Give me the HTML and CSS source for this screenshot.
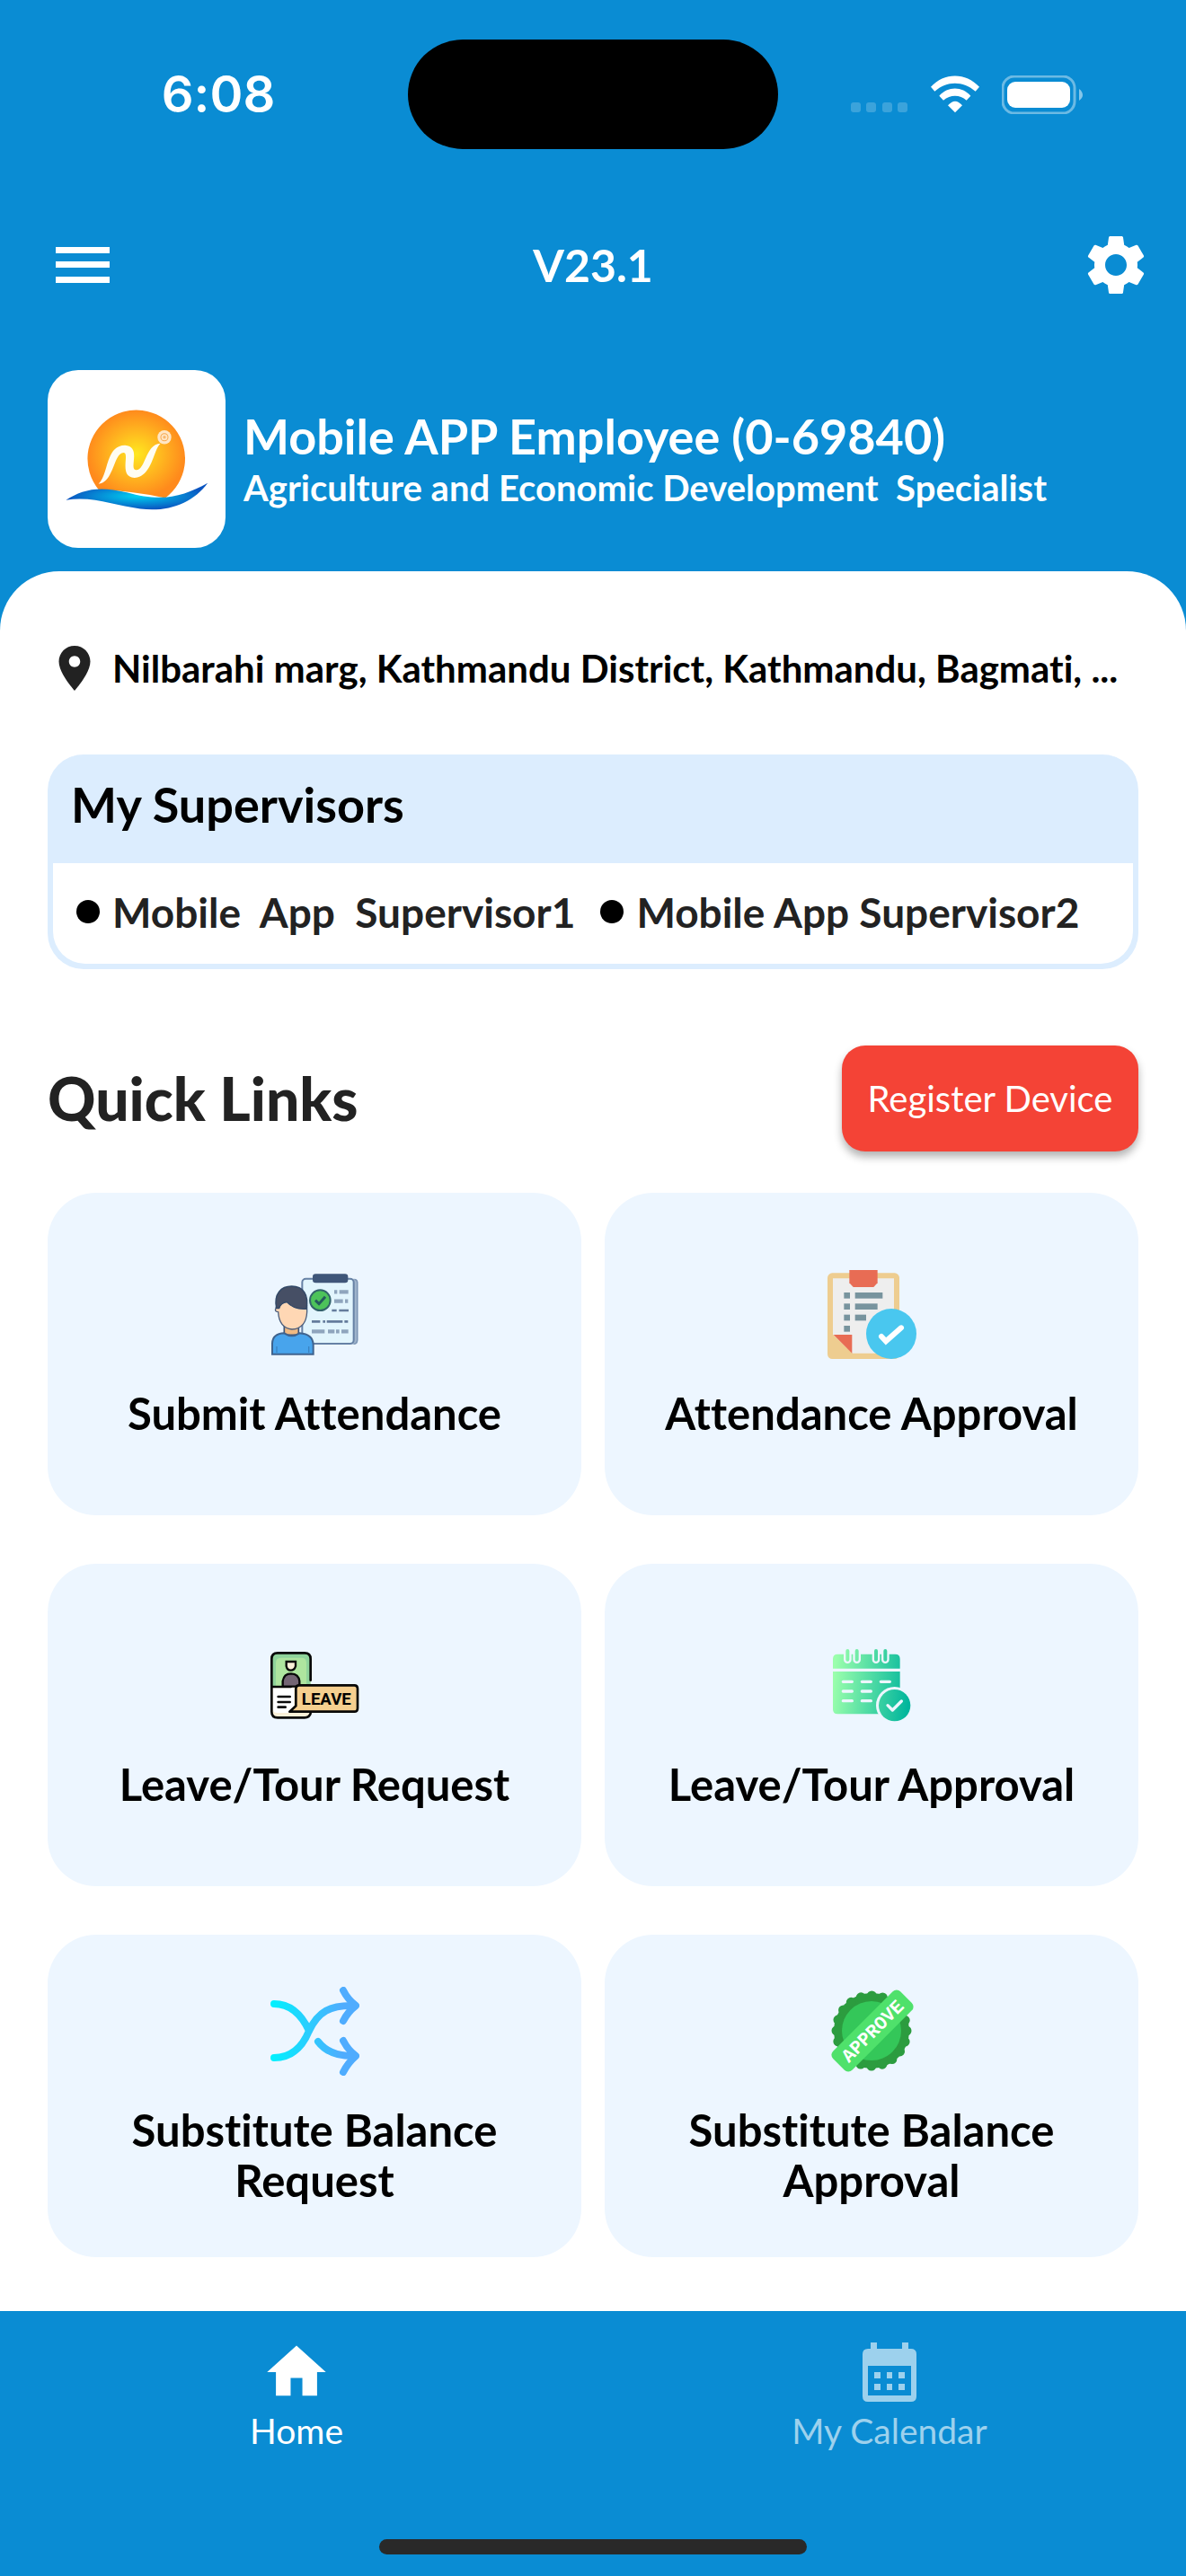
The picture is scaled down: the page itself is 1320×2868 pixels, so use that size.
FILE: index.html
```
<!DOCTYPE html>
<html lang="en">

<head>
    <meta charset="UTF-8">
    <meta name="viewport" content="width=device-width, initial-scale=1.0">
    <title>Employee Home</title>
    <link rel="stylesheet" href="styles.css">
</head>

<body>
    <header>
        <!-- status bar -->
        <div class="status-bar">
            <span class="time">6:08</span>
            <div class="island"></div>
            <div class="status-icons">
                <svg class="signal" viewBox="0 0 64 42" fill="#fff" opacity="0.2">
                    <rect x="0" y="30" width="11" height="11" rx="3" />
                    <rect x="17" y="30" width="11" height="11" rx="3" />
                    <rect x="35" y="30" width="11" height="11" rx="3" />
                    <rect x="52" y="30" width="11" height="11" rx="3" />
                </svg>
                <svg class="wifi" viewBox="403 68 168 126" fill="#fff">
                    <path d="M406 106C450 57 523 57 568 106L555 121C514 85 459 85 419 121Z" />
                    <path d="M434 136C462 103 511 103 539 136L525 151C503 131 471 131 448 151Z" />
                    <path d="M463 168Q487 140 511 168L487 192Z" />
                </svg>
                <svg class="battery" viewBox="0 0 90 43">
                    <rect x="1" y="1" width="80" height="41" rx="13" fill="none" stroke="#fff" stroke-width="3" opacity="0.4" />
                    <rect x="6" y="7" width="70" height="29" rx="9" fill="#fff" />
                    <path d="M86 15Q90 18 90 22Q90 25 86 28Z" fill="#fff" opacity="0.5" />
                </svg>
            </div>
        </div>

        <div class="top-bar">
            <button type="button" class="icon-button" aria-label="Menu">
                <svg class="menu-icon" viewBox="0 0 60 40" fill="#fff">
                    <rect x="0" y="0" width="60" height="7" />
                    <rect x="0" y="16" width="60" height="7" />
                    <rect x="0" y="33" width="60" height="7" />
                </svg>
            </button>
            <h1>V23.1</h1>
            <button type="button" class="icon-button" aria-label="Settings">
                <svg class="gear-icon" viewBox="0 0 24 24" fill="#fff">
                    <path d="M19.14 12.94c.04-.3.06-.61.06-.94 0-.32-.02-.64-.07-.94l2.03-1.58c.18-.14.23-.41.12-.61l-1.92-3.32c-.12-.22-.37-.29-.59-.22l-2.39.96c-.5-.38-1.03-.7-1.62-.94l-.36-2.54c-.04-.24-.24-.41-.48-.41h-3.84c-.24 0-.43.17-.47.41l-.36 2.54c-.59.24-1.13.57-1.62.94l-2.39-.96c-.22-.08-.47 0-.59.22L2.74 8.87c-.12.21-.08.47.12.61l2.03 1.58c-.05.3-.09.63-.09.94s.02.64.07.94l-2.03 1.58c-.18.14-.23.41-.12.61l1.92 3.32c.12.22.37.29.59.22l2.39-.96c.5.38 1.03.7 1.62.94l.36 2.54c.05.24.24.41.48.41h3.84c.24 0 .44-.17.47-.41l.36-2.54c.59-.24 1.13-.56 1.62-.94l2.39.96c.22.08.47 0 .59-.22l1.92-3.32c.12-.22.07-.47-.12-.61l-2.01-1.58zM12 15.6c-1.98 0-3.6-1.62-3.6-3.6s1.62-3.6 3.6-3.6 3.6 1.62 3.6 3.6-1.62 3.6-3.6 3.6z" />
                </svg>
            </button>
        </div>

        <div class="profile">
            <div class="logo">
                <svg viewBox="37 37 591 591">
                    <defs>
                        <radialGradient id="sun">
                            <stop offset="0" stop-color="#ffe81f" />
                            <stop offset="0.55" stop-color="#ffb41f" />
                            <stop offset="1" stop-color="#ff8a1c" />
                        </radialGradient>
                        <radialGradient id="wave">
                            <stop offset="0" stop-color="#00d0f0" />
                            <stop offset="1" stop-color="#0a54c0" />
                        </radialGradient>
                    </defs>
                    <path d="M206 434A162 162 0 1 1 428 462Q330 440 206 434Z" fill="url(#sun)" />
                    <path d="M206 415C240 385 228 288 294 287C350 290 306 367 330 369C362 372 362 282 412 281C388 302 384 392 325 395C274 393 308 318 292 312C256 306 258 412 206 415Z" fill="#fffdf2" />
                    <circle cx="425" cy="260" r="23" fill="#ffe6c4" />
                    <circle cx="425" cy="260" r="12" fill="none" stroke="#f7a84e" stroke-width="3" />
                    <circle cx="425" cy="260" r="5" fill="#f7b870" />
                    <path d="M98 469C150 436 205 420 300 444C420 478 490 455 569 412C520 478 440 510 345 498C260 488 190 455 98 469Z" fill="url(#wave)" />
                </svg>
            </div>
            <div class="profile-text">
                <h2>Mobile APP Employee (0-69840)</h2>
                <p>Agriculture and Economic Development&nbsp; Specialist</p>
            </div>
        </div>
    </header>

    <main>
        <div class="location">
            <svg viewBox="0 0 24 24" fill="#222">
                <path d="M12 2C8.13 2 5 5.13 5 9c0 5.25 7 13 7 13s7-7.75 7-13c0-3.87-3.13-7-7-7zm0 9.500c-1.380 0-2.500-1.120-2.500-2.500s1.120-2.500 2.500-2.500 2.500 1.120 2.500 2.500-1.120 2.500-2.500 2.500z" />
            </svg>
            <p>Nilbarahi marg, Kathmandu District, Kathmandu, Bagmati, ...</p>
        </div>

        <section class="supervisors">
            <h2>My Supervisors</h2>
            <ul>
                <li>Mobile&nbsp; App&nbsp; Supervisor1</li>
                <li>Mobile App Supervisor2</li>
            </ul>
        </section>

        <div class="links-header">
            <h2>Quick Links</h2>
            <button type="button" class="register-button">Register Device</button>
        </div>

        <section class="links">
            <a class="tile" href="#">
                <svg viewBox="62 45 297 297">
                    <rect x="174" y="74" width="180" height="219" rx="12" fill="#9fb4cc" />
                    <rect x="168" y="74" width="172" height="217" rx="12" fill="#e2f5fd" stroke="#6681a5" stroke-width="6" />
                    <path d="M343 76Q353 78 352 90V279Q351 291 340 292" fill="none" stroke="#7b94b3" stroke-width="4" />
                    <rect x="203" y="58" width="118" height="30" rx="10" fill="#3f5679" />
                    <g stroke="#8fa5bd" stroke-width="13">
                        <path d="M275 118H285M292 118H322M275 149H304M311 149H321" />
                        <path d="M200 250H243M254 250H276M281 250H292M299 250H322" />
                    </g>
                    <path d="M267 180H283M291 180H323M200 217H228M237 217H245M250 217H303M309 217H321" stroke="#647c9c" stroke-width="8" />
                    <circle cx="228" cy="146" r="34" fill="#4dc35a" stroke="#33636b" stroke-width="6" />
                    <path d="M212 146L224 158L245 134" fill="none" stroke="#245b5d" stroke-width="9" />
                    <path d="M108 222H156V262H108Z" fill="#efb982" stroke="#3d5375" stroke-width="5" />
                    <path d="M83 164Q135 128 184 164V185Q181 240 134 243Q91 238 88 185Q74 184 80 172Z" fill="#ffd7b4" stroke="#4c5e7c" stroke-width="4" />
                    <path d="M82 173C72 123 98 99 133 99C171 99 191 126 182 175Q140 178 117 152Q96 155 91 173Z" fill="#464f65" stroke="#314867" stroke-width="4" />
                    <path d="M68 326V290C69 264 86 257 108 256Q133 273 159 256C188 258 204 269 205 294V326Z" fill="#48a4ec" stroke="#3f638e" stroke-width="6" />
                    <path d="M83 300V321M190 300V321" stroke="#3a83c2" stroke-width="4" />
                </svg>
                <span>Submit Attendance</span>
            </a>
            <a class="tile" href="#">
                <svg viewBox="63 45 297 297">
                    <rect x="63" y="55" width="240" height="287" rx="16" fill="#eecd90" />
                    <path d="M81 73H285V323H146L81 260Z" fill="#eee" />
                    <path d="M83 261H145V323Z" fill="#e86c54" />
                    <path d="M136 45H230V88L217 102H149L136 88Z" fill="#e86c54" />
                    <g fill="#78949e">
                        <rect x="118" y="120" width="20" height="20" />
                        <rect x="118" y="157" width="20" height="20" />
                        <rect x="118" y="194" width="20" height="20" />
                        <rect x="118" y="231" width="20" height="20" />
                        <rect x="155" y="120" width="92" height="20" />
                        <rect x="155" y="157" width="75" height="20" />
                        <rect x="155" y="194" width="37" height="20" />
                    </g>
                    <circle cx="276" cy="258" r="84" fill="#49c7ef" />
                    <path d="M243 267L258 283L309 238" fill="none" stroke="#fff" stroke-width="18" stroke-linecap="round" />
                </svg>
                <span>Attendance Approval</span>
            </a>
            <a class="tile" href="#">
                <svg viewBox="62 24 297 297">
                    <rect x="66" y="64" width="130" height="216" rx="20" fill="#faf0d8" />
                    <path d="M66 177V84Q66 64 86 64H176Q196 64 196 84V177Z" fill="#8fd49b" />
                    <path d="M80 177V98Q80 80 96 80H168Q182 80 182 98V177Z" fill="#aee59f" />
                    <path d="M70 181H140V240L121 264H84Q70 264 70 250Z" fill="#fff" />
                    <path d="M196 155V84Q196 64 176 64H86Q66 64 66 84V260Q66 280 86 280H176Q192 280 196 266M66 177H130" fill="none" stroke="#080808" stroke-width="8" stroke-linecap="round" />
                    <path d="M115 93H146V108Q142 122 130 122Q118 122 115 108Z" fill="#faf0d8" stroke="#080808" stroke-width="7" />
                    <path d="M103 176V158Q107 133 131 133Q156 134 159 158V176Z" fill="#746574" stroke="#080808" stroke-width="7" />
                    <path d="M88 210H127M88 228H127M88 245H112" stroke="#080808" stroke-width="8" stroke-linecap="round" />
                    <path d="M158 172H342Q353 172 353 184V248Q353 260 342 260H126L147 241V184Q147 172 158 172Z" fill="#f6cf8f" stroke="#080808" stroke-width="8" stroke-linejoin="round" />
                    <text x="249" y="237" class="leave-text">LEAVE</text>
                </svg>
                <span>Leave/Tour Request</span>
            </a>
            <a class="tile" href="#">
                <svg viewBox="63 24 297 297">
                    <defs>
                        <linearGradient id="mint" gradientUnits="userSpaceOnUse" x1="81" y1="160" x2="340" y2="190">
                            <stop offset="0" stop-color="#9bffac" />
                            <stop offset="1" stop-color="#00b59c" />
                        </linearGradient>
                    </defs>
                    <path d="M81 116V84Q81 68 97 68H289Q305 68 305 84V116ZM81 126H305V268H97Q81 268 81 252Z" fill="url(#mint)" />
                    <path d="M130 58V86M161 58V86M225 58V86M256 58V86" stroke="#edf6ff" stroke-width="26" stroke-linecap="round" />
                    <path d="M124 57A6 6 0 0 1 136 57V86A6 6 0 0 1 124 86ZM155 57A6 6 0 0 1 167 57V86A6 6 0 0 1 155 86ZM219 57A6 6 0 0 1 231 57V86A6 6 0 0 1 219 86ZM250 57A6 6 0 0 1 262 57V86A6 6 0 0 1 250 86Z" fill="url(#mint)" />
                    <path d="M115 160H145M178 160H208M241 160H271M115 192H145M178 192H208M115 224H145M178 224H208" stroke="#edf6ff" stroke-width="10" stroke-linecap="round" />
                    <circle cx="287" cy="239" r="62" fill="#edf6ff" />
                    <circle cx="287" cy="239" r="53" fill="url(#mint)" />
                    <path d="M264 239L280 255L310 225" fill="none" stroke="#edf6ff" stroke-width="10" stroke-linecap="round" stroke-linejoin="round" />
                </svg>
                <span>Leave/Tour Approval</span>
            </a>
            <a class="tile" href="#">
                <svg viewBox="0 0 99 99" fill="none" stroke="url(#sky)" stroke-width="8" stroke-linecap="round" stroke-linejoin="round">
                    <defs>
                        <linearGradient id="sky" gradientUnits="userSpaceOnUse" x1="0" y1="50" x2="80" y2="50">
                            <stop offset="0" stop-color="#00f2fe" />
                            <stop offset="1" stop-color="#4facfe" />
                        </linearGradient>
                    </defs>
                    <path d="M4 19C24 19 36 34 43 49M4 79C24 79 36 66 43 49C53 28 66 20 94 21" />
                    <path d="M81 4Q86 14 95 21Q86 28 81 38" />
                    <path d="M53 61Q66 78 94 77" />
                    <path d="M81 60Q86 70 95 77Q86 85 81 95" />
                </svg>
                <span>Substitute Balance Request</span>
            </a>
            <a class="tile" href="#">
                <svg viewBox="0 0 99 99">
                    <circle cx="49" cy="49" r="42" fill="#2c9c3f" />
                    <circle cx="49" cy="49" r="39" fill="none" stroke="#2c9c3f" stroke-width="11" stroke-linecap="round" stroke-dasharray="0 12.252" />
                    <circle cx="49" cy="49" r="33" fill="#34c759" />
                    <g transform="rotate(-45 50 49)">
                        <rect x="-3" y="34" width="106" height="30" rx="6" fill="#4fe16b" />
                        <text x="50" y="56" class="approve-text">APPROVE</text>
                    </g>
                </svg>
                <span>Substitute Balance Approval</span>
            </a>
        </section>
    </main>

    <nav>
        <div class="tabs">
            <a class="tab active" href="#">
                <svg viewBox="1 1 22 22" fill="currentColor">
                    <path d="M10 20v-6h4v6h5v-8h3L12 3 2 12h3v8z" />
                </svg>
                Home
            </a>
            <a class="tab" href="#">
                <svg viewBox="0 0 72 72" fill="currentColor" fill-rule="evenodd">
                    <path d="M15 3H22V10H50V3H57V10H60Q66 10 66 16V63Q66 69 60 69H12Q6 69 6 63V16Q6 10 12 10H15ZM12 29V62H60V29ZM19 36H26V43H19ZM33 36H39V43H33ZM46 36H53V43H46ZM19 49H26V56H19ZM33 49H39V56H33ZM46 49H53V56H46Z" />
                </svg>
                My Calendar
            </a>
        </div>
        <div class="home-indicator"></div>
    </nav>
</body>

</html>
```
FILE: styles.css
```
* {
    box-sizing: border-box;
}

body {
    font-family: Lato, "Open Sans", sans-serif;
    font-variant-ligatures: none;
    margin: 0;
    min-height: 100vh;
    display: flex;
    flex-direction: column;
    background-color: #0a8cd3;
    color: #000;
}

h1,
h2,
p,
ul {
    margin: 0;
    padding: 0;
}

a {
    text-decoration: none;
    color: inherit;
}

svg {
    display: block;
    flex-shrink: 0;
}

header {
    color: #fff;
}

.status-bar {
    display: grid;
    grid-template-columns: 1fr 412px 1fr;
    align-items: center;
    padding: 44px 0;
}

.time {
    font-family: Inter, sans-serif;
    font-size: 56px;
    font-weight: 600;
    text-align: center;
    padding-left: 32px;
}

.island {
    height: 122px;
    border-radius: 61px;
    background-color: #000;
}

.status-icons {
    display: flex;
    justify-content: flex-end;
    align-items: center;
    gap: 24px;
    padding-right: 115px;
}

.signal {
    width: 64px;
    height: 42px;
}

.wifi {
    width: 56px;
    height: 42px;
}

.battery {
    width: 90px;
    height: 43px;
}

.top-bar {
    display: grid;
    grid-template-columns: 1fr auto 1fr;
    align-items: center;
    height: 170px;
    padding: 0 38px 0 62px;
    padding: 0 38px;
}

.icon-button {
    justify-self: start;
    width: 108px;
    height: 108px;
    padding: 0 24px;
    border: none;
    background: none;
    cursor: pointer;
}

.icon-button:last-child {
    justify-self: end;
    width: 80px;
    padding: 0;
}

.menu-icon {
    width: 60px;
    height: 40px;
}

.gear-icon {
    width: 80px;
    height: 80px;
}

h1,
h2 {
    font-size: 54px;
    font-weight: 700;
    line-height: 64px;
}

h1 {
    font-size: 50px;
}

.profile {
    display: flex;
    align-items: center;
    gap: 20px;
    padding: 32px 53px 26px;
}

.logo {
    width: 198px;
    height: 198px;
    border-radius: 34px;
    background-color: #fff;
    overflow: hidden;
}

.profile-text p,
.location p {
    font-size: 40px;
    font-weight: 700;
    line-height: 50px;
}

.location p {
    font-size: 42px;
}

main {
    flex: 1;
    padding: 78px 53px 58px;
    border-radius: 66px 66px 0 0;
    background-color: #fff;
}

.location {
    display: flex;
    align-items: center;
    gap: 12px;
    white-space: nowrap;
}

.location svg {
    width: 60px;
    height: 60px;
}

.supervisors {
    margin-top: 66px;
    border: 6px solid #dcedfe;
    border-top: none;
    border-radius: 40px;
    background-color: #dcedfe;
}

.supervisors h2 {
    padding: 24px 20px 33px;
}

.supervisors ul {
    display: flex;
    gap: 28px;
    height: 112px;
    padding: 0 26px 4px;
    list-style: none;
    background-color: #fff;
    border-radius: 0 0 36px 36px;
}

.supervisors li {
    display: flex;
    align-items: center;
    gap: 14px;
    font-size: 46px;
    font-weight: 700;
    color: #222;
    white-space: nowrap;
}

.supervisors li::before {
    content: "";
    width: 26px;
    height: 26px;
    border-radius: 50%;
    background-color: #000;
}

.links-header {
    display: flex;
    justify-content: space-between;
    align-items: center;
    margin: 85px 0 46px;
}

.links-header h2 {
    font-size: 66px;
    font-weight: 900;
    color: #222;
}

.register-button {
    font-family: inherit;
    font-size: 40px;
    color: #fff;
    min-width: 330px;
    height: 118px;
    padding: 0 26px;
    border: none;
    border-radius: 26px;
    background-color: #f44336;
    box-shadow: 0 6px 10px rgba(0, 0, 0, 0.3);
    cursor: pointer;
}

.links {
    display: grid;
    grid-template-columns: 1fr 1fr;
    gap: 54px 26px;
}

.tile {
    display: flex;
    flex-direction: column;
    align-items: center;
    justify-content: center;
    gap: 32px;
    min-height: 359px;
    padding: 0 50px;
    border-radius: 54px;
    background-color: #edf6ff;
    font-size: 49px;
    font-weight: 700;
    line-height: 56px;
    text-align: center;
}

.tile svg {
    width: 99px;
    height: 99px;
}

.leave-text {
    font-family: Roboto, sans-serif;
    font-size: 56px;
    font-weight: 700;
    text-anchor: middle;
}

.approve-text {
    font-family: "Liberation Mono", monospace;
    font-size: 21px;
    font-weight: 700;
    text-anchor: middle;
    fill: #fff;
}

nav {
    display: flex;
    flex-direction: column;
    justify-content: space-between;
    height: 295px;
    padding: 32px 0 24px;
    background-color: #0a8cd3;
}

.tabs {
    display: flex;
}

.tab {
    flex: 1;
    display: flex;
    flex-direction: column;
    align-items: center;
    gap: 5px;
    font-size: 39px;
    line-height: 48px;
    color: #9dd1ed;
}

.tab.active {
    color: #fff;
}

.tab svg {
    width: 72px;
    height: 72px;
}

.home-indicator {
    align-self: center;
    width: 36%;
    height: 17px;
    border-radius: 9px;
    background-color: #292929;
}
```
